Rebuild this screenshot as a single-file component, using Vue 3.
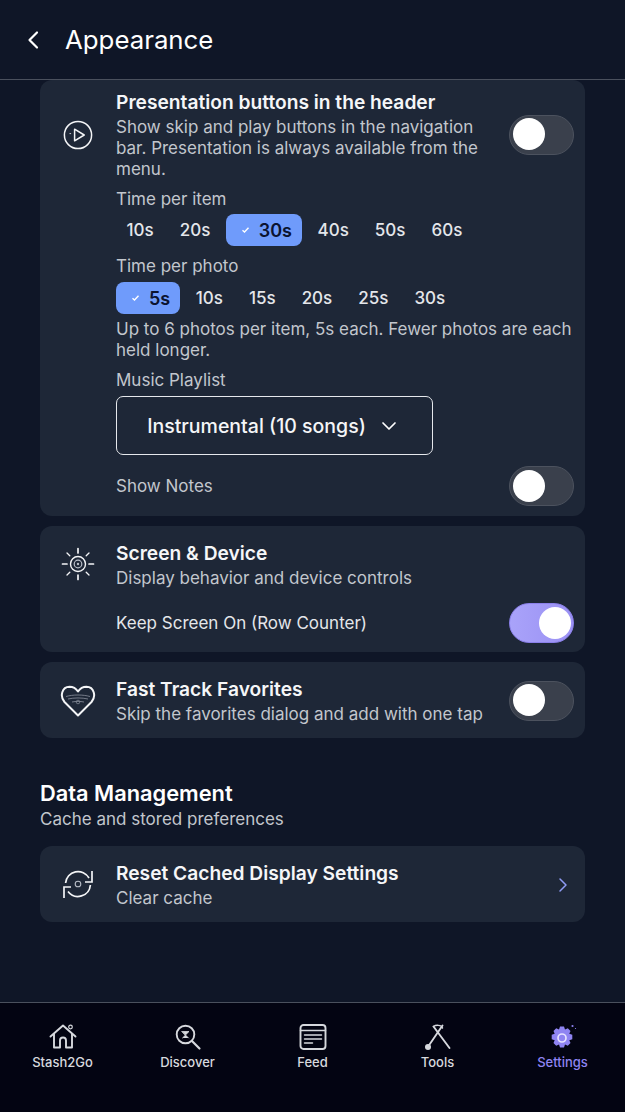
<script setup>
const itemTimes = [
  { label: '10s' }, { label: '20s' }, { label: '30s', active: true },
  { label: '40s' }, { label: '50s' }, { label: '60s' }
]
const photoTimes = [
  { label: '5s', active: true }, { label: '10s' }, { label: '15s' },
  { label: '20s' }, { label: '25s' }, { label: '30s' }
]
</script>

<template>
  <div class="screen">
    <header class="header">
      <svg class="back" width="14" height="20" viewBox="0 0 14 20" fill="none">
        <path d="M11 2.500 3.500 10l7.500 7.500" stroke="#fff" stroke-width="2.200" stroke-linecap="round" stroke-linejoin="round" />
      </svg>
      <h1 class="page-title">Appearance</h1>
    </header>

    <main class="main">
      <section class="card card-presentation">
        <div class="top-row">
          <div class="icon-col">
            <svg width="30" height="30" viewBox="0 0 30 30" fill="none" stroke="#f4f5f7">
              <circle cx="15" cy="15" r="13.600" stroke-width="1.500" />
              <path d="M11.600 9.200 21.200 15l-9.600 5.800z" stroke-width="1.500" stroke-linejoin="round" />
              <path d="M6.500 13.600h1.600" stroke-width=".8" />
            </svg>
          </div>
          <div class="text-col">
            <div class="title">Presentation buttons in the header</div>
            <div class="desc">Show skip and play buttons in the navigation bar. Presentation is always available from the menu.</div>
          </div>
          <div class="toggle"><span class="knob"></span></div>
        </div>

        <div class="options">
          <div class="label label-first">Time per item</div>
          <div class="chips chips-first">
            <span v-for="t in itemTimes" :key="t.label" class="chip" :class="{ on: t.active }">
              <svg v-if="t.active" class="tick" width="9" height="8" viewBox="0 0 9 8" fill="none">
                <path d="M1.500 4.200 3.500 6l4-4.200" stroke="#fff" stroke-width="1.400" />
              </svg>
              {{ t.label }}
            </span>
          </div>
          <div class="label label-photo">Time per photo</div>
          <div class="chips">
            <span v-for="t in photoTimes" :key="t.label" class="chip" :class="{ on: t.active }">
              <svg v-if="t.active" class="tick" width="9" height="8" viewBox="0 0 9 8" fill="none">
                <path d="M1.500 4.200 3.500 6l4-4.200" stroke="#fff" stroke-width="1.400" />
              </svg>
              {{ t.label }}
            </span>
          </div>
          <div class="desc hint">Up to 6 photos per item, 5s each. Fewer photos are each held longer.</div>
          <div class="label label-music">Music Playlist</div>
          <div class="select">
            <span>Instrumental (10 songs)</span>
            <svg width="16" height="10" viewBox="0 0 16 10" fill="none">
              <path d="M2 2l6 6 6-6" stroke="#fff" stroke-width="1.700" stroke-linecap="round" stroke-linejoin="round" />
            </svg>
          </div>
          <div class="row notes-row">
            <span class="label">Show Notes</span>
            <div class="toggle"><span class="knob"></span></div>
          </div>
        </div>
      </section>

      <section class="card card-screen">
        <div class="top-row">
          <div class="icon-col icon-top">
            <svg width="34" height="34" viewBox="0 0 34 34" fill="none" stroke="#f4f5f7">
              <circle cx="17" cy="17" r="7.500" stroke-width="1.400" />
              <circle cx="17" cy="17" r="3.800" stroke="#b9bec8" stroke-width="1.200" />
              <circle cx="17" cy="17" r="1.200" fill="#b9bec8" stroke="none" />
              <path d="M17 1.500v4.500M17 28v4.500M1.500 17H6M28 17h4.500" stroke-width="1.700" stroke-linecap="round" />
              <path d="M6 6l2.800 2.800M25.200 25.200 28 28M28 6l-2.800 2.800M8.800 25.200 6 28" stroke-width="1.300" stroke-linecap="round" />
            </svg>
          </div>
          <div class="text-col">
            <div class="title">Screen &amp; Device</div>
            <div class="desc">Display behavior and device controls</div>
          </div>
        </div>
        <div class="row keep-row">
          <span class="label bright">Keep Screen On (Row Counter)</span>
          <div class="toggle toggle-on"><span class="knob"></span></div>
        </div>
      </section>

      <section class="card card-fast">
        <div class="top-row">
          <div class="icon-col">
            <svg width="36" height="32" viewBox="0 0 36 32" fill="none">
              <path d="M18 30.500 4.500 17C-.5 11 2 2 9.500 1.800 13 1.800 16 3.500 18 6.500 20 3.500 23 1.800 26.500 1.800 34 2 36.500 11 31.500 17z" stroke="#f4f5f7" stroke-width="2" stroke-linejoin="round" />
              <path d="M6 11.500c7-2 17-2 24 0M8 14c6-1.400 14-1.400 20 0M12 17c4-.8 8-.8 12 0" stroke="#7f8592" stroke-width=".9" />
              <circle cx="18" cy="17" r="1.800" stroke="#7f8592" stroke-width=".8" />
            </svg>
          </div>
          <div class="text-col">
            <div class="title">Fast Track Favorites</div>
            <div class="desc">Skip the favorites dialog and add with one tap</div>
          </div>
          <div class="toggle"><span class="knob"></span></div>
        </div>
      </section>

      <section class="data-head">
        <h2 class="section-title">Data Management</h2>
        <div class="desc">Cache and stored preferences</div>
      </section>

      <section class="card card-reset">
        <div class="top-row">
          <div class="icon-col">
            <svg width="32" height="32" viewBox="0 1 32 32" fill="none" stroke="#f4f5f7" stroke-width="1.700">
              <path d="M3.600 15A12.500 12.500 0 0 1 27 10" />
              <path d="M30 3v11h-7" />
              <path d="M28.400 17A12.500 12.500 0 0 1 6 23.500" />
              <path d="M2 30V19h7" />
              <circle cx="16" cy="16" r="2.800" stroke="#b9bec8" stroke-width="1.100" />
            </svg>
          </div>
          <div class="text-col">
            <div class="title">Reset Cached Display Settings</div>
            <div class="desc">Clear cache</div>
          </div>
          <svg class="chev" width="10" height="16" viewBox="0 0 10 16" fill="none">
            <path d="M2 2l6 6-6 6" stroke="#8f9cf5" stroke-width="1.500" stroke-linecap="round" stroke-linejoin="round" />
          </svg>
        </div>
      </section>
    </main>

    <nav class="tabs">
      <div class="tab">
        <svg width="28" height="28" viewBox="0 0 28 28" fill="none" stroke="#d7d9de" stroke-width="1.900" stroke-linejoin="round" stroke-linecap="round">
          <path d="M1.500 13.500 14 2.500l12.500 11" />
          <path d="M5 11v13.500h6v-7a3 3 0 0 1 6 0v7h6V11" />
          <circle cx="21.500" cy="4" r="1.800" stroke-width="1.200" />
        </svg>
        <span>Stash2Go</span>
      </div>
      <div class="tab">
        <svg width="28" height="28" viewBox="0 0 28 28" fill="none" stroke="#d7d9de" stroke-width="1.900" stroke-linecap="round">
          <circle cx="11.500" cy="11.500" r="8.800" />
          <path d="M18 18l7.500 7.500" stroke-width="2.200" />
          <path d="M8 8.500h7L11.500 12zM8.500 15l3-3 3 3" fill="#d7d9de" stroke-width=".8" />
        </svg>
        <span>Discover</span>
      </div>
      <div class="tab">
        <svg width="28" height="28" viewBox="0 0 28 28" fill="none" stroke="#d7d9de" stroke-width="1.900" stroke-linecap="round">
          <rect x="1.500" y="2" width="25" height="24" rx="3" />
          <path d="M1.500 7.500h25" stroke-width="1.500" />
          <path d="M5.500 12h17M5.500 16h17M5.500 20h8" stroke-width="1.500" />
        </svg>
        <span>Feed</span>
      </div>
      <div class="tab">
        <svg width="28" height="28" viewBox="0 0 28 28" fill="none" stroke="#d7d9de" stroke-linecap="round">
          <path d="M18.500 2.500 4.500 23" stroke-width="1.900" />
          <path d="M9.500 3.500 25.500 25" stroke-width="1.900" />
          <path d="M9.500 3.500c2-1.500 8-2 9 1.500" stroke-width="1.500" />
          <circle cx="4" cy="24" r="3" fill="#d7d9de" stroke="none" />
        </svg>
        <span>Tools</span>
      </div>
      <div class="tab tab-active">
        <svg width="28" height="28" viewBox="0 0 28 28" fill="none">
          <path d="M12 2.500h4l1 3 2.800-1.200 2.700 2.700-1.200 2.800 3 1v4.400l-3 1 1.200 2.800-2.700 2.700-2.800-1.200-1 3h-4l-1-3-2.800 1.200-2.700-2.700 1.200-2.800-3-1V10.800l3-1-1.200-2.800 2.700-2.700L11 5.500z" transform="translate(-1 1)" fill="#8f84f2" />
          <circle cx="13" cy="15" r="4" stroke="#e6e2ff" stroke-width="1.700" />
          <circle cx="23.500" cy="3" r="1.100" fill="#8f84f2" />
          <circle cx="26.500" cy="5.500" r=".6" fill="#8f84f2" />
        </svg>
        <span>Settings</span>
      </div>
    </nav>
  </div>
</template>

<style>
html, body { margin: 0; background: #0f1627; }
</style>

<style scoped>
.screen {
  width: 625px;
  height: 1112px;
  display: flex;
  flex-direction: column;
  overflow: hidden;
  background: #0f1627;
  font-family: Inter, "Noto Sans", sans-serif;
  color: #fff;
}
.header {
  height: 78px;
  flex: none;
  padding-top: 1px;
  border-bottom: 1px solid #4a505d;
  display: flex;
  align-items: center;
  padding-left: 26px;
  gap: 25px;
}
.back { flex: none; }
.page-title {
  margin: 0;
  font-size: 25.800px;
  font-weight: 400;
  line-height: 34px;
}
.main {
  flex: 1;
  min-height: 0;
  padding: 0 40px;
  display: flex;
  flex-direction: column;
  gap: 10px;
}
.card {
  background: #1e2737;
  border-radius: 12px;
  padding: 14px 11px 13px 0;
}
.card-presentation { padding-top: 9px; padding-bottom: 10px; }
.card-screen { padding-bottom: 9px; }
.top-row { display: flex; align-items: center; }
.icon-col {
  width: 76px;
  flex: none;
  display: flex;
  justify-content: center;
  align-items: center;
}
.icon-top { align-self: flex-start; margin-top: 7px; }
.text-col { flex: 1; min-width: 0; padding-right: 20px; }
.title {
  font-size: 19.200px;
  font-weight: 600;
  line-height: 27px;
  color: #f5f6f8;
}
.desc {
  font-size: 17px;
  line-height: 21px;
  margin-top: 1px;
  color: #c2c6cd;
}
.label {
  font-size: 17px;
  line-height: 21px;
  color: #c2c6cd;
}
.bright { color: #e4e6ea; }
.options { margin-left: 76px; display: flex; flex-direction: column; align-items: stretch; }
.label-first { margin-top: 9px; }
.label-photo { margin-top: 10px; }
.label-music { margin-top: 9px; }
.chips { display: flex; gap: 5px; margin-top: 5px; }
.chips-first { margin-top: 4px; }
.chip {
  height: 32px;
  padding: 0 10.500px;
  border-radius: 8px;
  display: inline-flex;
  align-items: center;
  gap: 9px;
  font-size: 17px;
  font-weight: 500;
  color: #e4e6ea;
}
.chip.on {
  background: #6f9bfb;
  color: #0b1330;
  font-size: 18px;
  font-weight: 600;
  padding: 0 10px 0 15px;
}
.tick { flex: none; }
.hint { margin-top: 5px; }
.select {
  width: 317px;
  height: 59px;
  margin-top: 5px;
  box-sizing: border-box;
  border: 1.500px solid #e6e8ec;
  border-radius: 7px;
  padding-right: 5px;
  display: flex;
  align-items: center;
  justify-content: center;
  gap: 15px;
  font-size: 19.500px;
  font-weight: 500;
  color: #f5f6f8;
}
.row { display: flex; align-items: center; justify-content: space-between; }
.notes-row { margin-top: 11px; }
.keep-row { margin-left: 76px; margin-top: 14px; }
.toggle {
  width: 65px;
  height: 40px;
  flex: none;
  box-sizing: border-box;
  border-radius: 20px;
  border: 1.500px solid #4c525e;
  background: #3a404c;
  position: relative;
}
.knob {
  position: absolute;
  left: 2.500px;
  top: 2.500px;
  width: 32px;
  height: 32px;
  border-radius: 50%;
  background: #fff;
}
.toggle-on {
  background: linear-gradient(90deg, #a9a3fa, #9a90f3);
  border-color: #8b80ea;
}
.toggle-on .knob { left: auto; right: 2.500px; }
.data-head { margin-top: 31px; margin-bottom: 6px; }
.section-title {
  margin: 0;
  font-size: 21.800px;
  font-weight: 600;
  line-height: 28px;
  color: #fff;
}
.data-head .desc { margin-top: 1px; line-height: 22px; }
.chev { flex: none; margin-right: 6px; }
.tabs {
  height: 109px;
  flex: none;
  border-top: 1px solid #4a505d;
  background: #030412;
  display: flex;
}
.tab {
  flex: 1;
  display: flex;
  flex-direction: column;
  align-items: center;
  padding-top: 20px;
  gap: 1px;
  font-size: 13px;
  font-weight: 500;
  color: #d7d9de;
}
.tab span { line-height: 16px; margin-top: 2px; }
.tab-active { color: #8f84f2; }
</style>
